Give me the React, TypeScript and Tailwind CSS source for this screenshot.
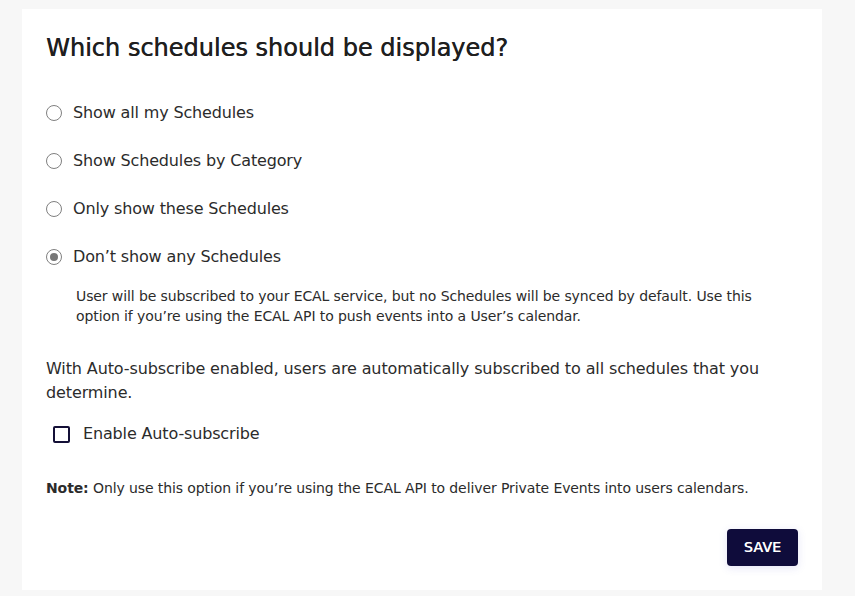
import React, { useState } from "react";

const options = [
  "Show all my Schedules",
  "Show Schedules by Category",
  "Only show these Schedules",
  "Don’t show any Schedules",
];

export default function App() {
  const [sel, setSel] = useState(3);
  const [auto, setAuto] = useState(false);
  return (
    <div
      className="min-h-[596px] w-full bg-[#f7f7f7] pt-[9px] pl-[22px] pr-[33px] pb-[6px] text-[#2b2b2b]"
      style={{ fontFamily: '"DejaVu Sans", sans-serif' }}
    >
      <div className="bg-white w-[800px] h-[581px] px-[24px] pt-[25px] flex flex-col">
        <h1 className="text-[24px] leading-[29px] font-normal text-[#1f1f1f] [text-shadow:0.5px_0_0_#1f1f1f]">
          Which schedules should be displayed?
        </h1>
        <div className="mt-[38px] flex flex-col gap-[24px]">
          {options.map((o, i) => (
            <label key={o} className="flex items-center gap-[11px] h-[24px] cursor-pointer">
              <span
                className="w-[16px] h-[16px] rounded-full border-[1.5px] border-[#808080] flex items-center justify-center"
                onClick={() => setSel(i)}
              >
                {sel === i && <span className="w-[8px] h-[8px] rounded-full bg-[#777]" />}
              </span>
              <span className="text-[16px] leading-[24px] text-[#2b2b2b] tracking-[-0.15px]">{o}</span>
            </label>
          ))}
        </div>
        <p className="mt-[17px] ml-[30px] text-[14px] leading-[20px] text-[#2b2b2b] pr-[30px] tracking-[-0.1px]">
          User will be subscribed to your ECAL service, but no Schedules will be synced by default. Use this
          option if you’re using the ECAL API to push events into a User’s calendar.
        </p>
        <p className="mt-[31px] text-[16px] leading-[24px] text-[#2b2b2b] tracking-[-0.12px]">
          With Auto-subscribe enabled, users are automatically subscribed to all schedules that you
          determine.
        </p>
        <label className="mt-[17px] ml-[7px] flex items-center gap-[13px] h-[24px] cursor-pointer" onClick={() => setAuto(!auto)}>
          <span className="w-[17px] h-[17px] rounded-[2px] border-2 border-[#141037] flex items-center justify-center">
            {auto && <span className="w-[9px] h-[9px] bg-[#141037]" />}
          </span>
          <span className="text-[16px] leading-[24px] tracking-[-0.15px]">Enable Auto-subscribe</span>
        </label>
        <p className="mt-[32px] text-[14px] leading-[20px] tracking-[-0.1px]">
          <span className="font-bold">Note:</span> Only use this option if you’re using the ECAL API to deliver Private Events into users calendars.
        </p>
        <div className="mt-[31px] flex justify-end">
          <button className="w-[71px] h-[37px] rounded-[4px] bg-[#0f0c3b] text-white text-[14px] font-normal tracking-[0.3px] [text-shadow:0.5px_0_0_#ffffff] shadow-[0_2px_8px_rgba(80,80,200,0.15)]">
            SAVE
          </button>
        </div>
      </div>
    </div>
  );
}
